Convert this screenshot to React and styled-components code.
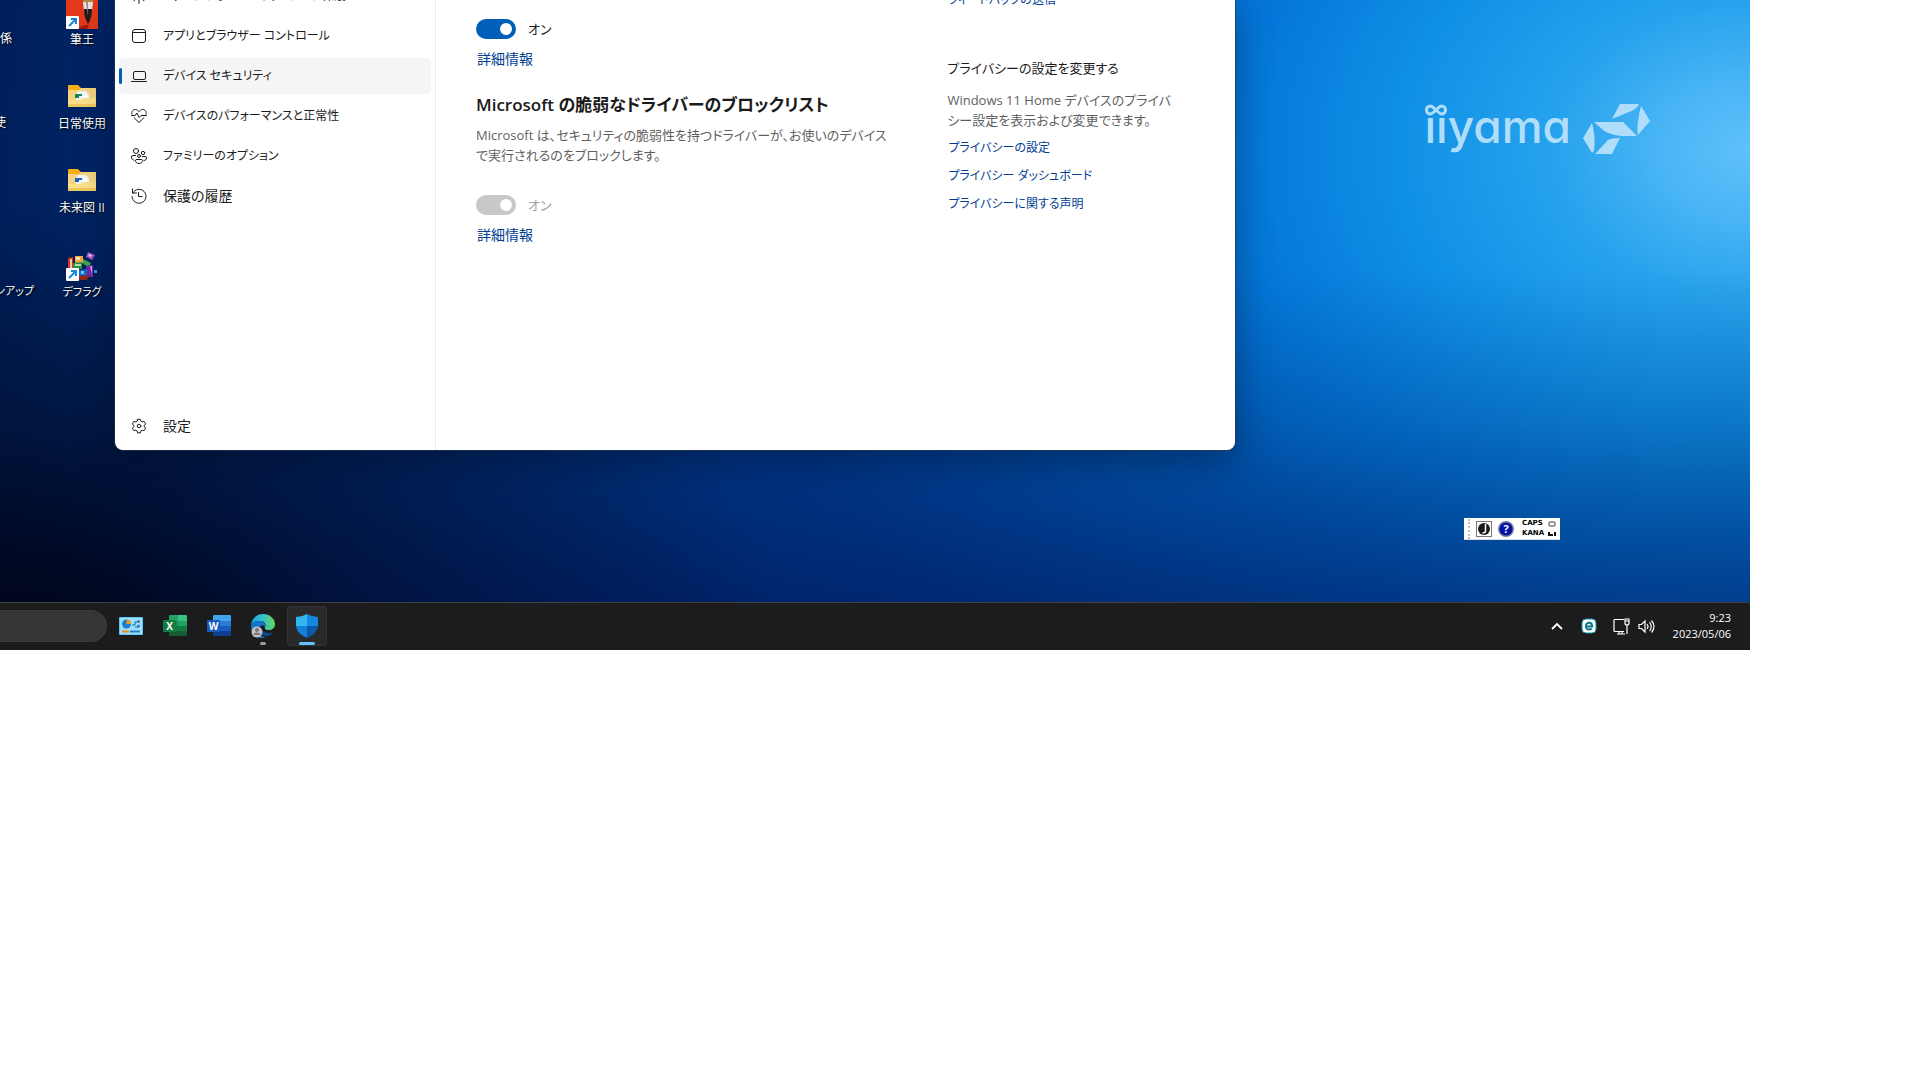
import styled, { createGlobalStyle, css } from "styled-components";

const GlobalStyle = createGlobalStyle`
  * {
    box-sizing: border-box;
  }

  body {
    margin: 0;
    background: #ffffff;
    font-family: "Open Sans", "Noto Sans CJK JP", sans-serif;
    font-feature-settings: "palt";
    font-size: 13px;
    line-height: 20px;
    color: #1b1b1b;
  }

  button {
    font: inherit;
    font-feature-settings: inherit;
    color: inherit;
    border: 0;
    padding: 0;
    background: none;
  }

  svg {
    display: block;
    flex: none;
  }
`;

const Screen = styled.div`
  margin-right: 170px;
  overflow: hidden;
`;

const Desktop = styled.main`
  display: grid;
  grid-template-columns: 115px minmax(0, 1fr) 515px;
  overflow: hidden;
  background:
    radial-gradient(ellipse 45% 75% at 0% 108%, rgba(0, 2, 14, 0.9), rgba(0, 2, 14, 0.35) 50%, transparent),
    linear-gradient(to bottom, transparent 45%, rgba(0, 30, 80, 0.2) 70%, rgba(0, 15, 75, 0.5) 100%),
    radial-gradient(
      ellipse 100% 220% at 100% 25%,
      #5fc1fb 0%,
      #4ab5f5 5%,
      #27a3ed 11%,
      #1090e6 20%,
      #0478da 29%,
      #0062c4 38%,
      #003f98 58%,
      #00276b 90%,
      #001c55 105%
    );
`;

/* 바탕화면 아이콘 */
const Shortcuts = styled.div`
  display: flex;
  gap: 16px;
  margin: -3px 0 0 -33px;
`;

const ShortcutColumn = styled.div`
  display: flex;
  flex-direction: column;
  gap: 32px;
  width: 66px;
  flex: none;
`;

const Shortcut = styled.button`
  display: flex;
  flex-direction: column;
  align-items: center;
  height: 52px;
  color: #ffffff;
  font-size: ${({ $small }) => ($small ? "11px" : "12px")};
  white-space: nowrap;
  text-shadow: 1px 1px 2px #000000;

  svg {
    margin-bottom: 1px;
  }
`;

const Blank = styled.span`
  height: 33px;
`;

/* Windows 보안 창 */
const Window = styled.section`
  display: grid;
  grid-template-columns: 321px minmax(0, 1fr);
  margin-bottom: 152px;
  background: #ffffff;
  border-radius: 0 0 8px 8px;
  box-shadow:
    0 0 0 1px rgba(40, 60, 80, 0.6),
    0 12px 36px rgba(0, 10, 30, 0.4);
  z-index: 1;
`;

const Nav = styled.nav`
  display: flex;
  flex-direction: column;
  gap: 4px;
  margin-top: -22px;
  padding: 0 4px 6px;
  border-right: 1px solid #ebebeb;
`;

const NavItem = styled.a`
  display: flex;
  align-items: center;
  gap: 16px;
  height: 36px;
  padding-left: 12px;
  border-radius: 5px;
  color: #1b1b1b;
  font-size: ${({ $large }) => ($large ? "14px" : "12px")};
  line-height: 22px;
  text-decoration: none;
  white-space: nowrap;

  ${({ $active }) =>
    $active &&
    css`
      padding-left: 0;
      gap: 0;
      background: #f5f5f5;

      &::before {
        content: "";
        width: 3px;
        height: 16px;
        margin-right: 9px;
        border-radius: 2px;
        background: #005fb8;
      }

      svg {
        margin-right: 16px;
      }
    `}

  &:last-child {
    margin-top: 190px;
  }
`;

const Content = styled.div`
  display: grid;
  grid-template-columns: minmax(0, 3fr) minmax(0, 2fr);
  gap: 40px;
  padding-left: 40px;
`;

const Article = styled.article`
  padding-top: 19px;
`;

const Aside = styled.aside`
  margin-top: -10px;
`;

const Title = styled.h2`
  margin: 22px 0 6px;
  font-size: 17px;
  font-weight: 600;
  line-height: 28px;
  white-space: nowrap;
`;

const SubTitle = styled.h3`
  margin: 48px 0 12px;
  font-size: 13px;
  font-weight: 400;
  line-height: 20px;
`;

const Text = styled.p`
  margin: 0;
  color: #5f5f5f;
  white-space: nowrap;
`;

const TextLink = styled.a`
  display: block;
  padding-left: 1px;
  color: #003e92;
  font-size: ${({ $large }) => ($large ? "14px" : "12px")};
  text-decoration: none;
`;

const LinkList = styled.div`
  display: flex;
  flex-direction: column;
  gap: 8px;
  margin-top: 8px;
`;

const SwitchLabel = styled.label`
  display: flex;
  align-items: center;
  gap: 12px;
  margin: ${({ $spaced }) => ($spaced ? "30px 0 10px" : "0 0 10px")};
  color: ${({ $disabled }) => ($disabled ? "#a0a0a0" : "#1b1b1b")};
`;

const Switch = styled.input`
  appearance: none;
  display: flex;
  align-items: center;
  justify-content: flex-end;
  width: 40px;
  height: 20px;
  margin: 0;
  padding: 4px;
  border-radius: 10px;
  background: #005fb8;

  &::before {
    content: "";
    width: 12px;
    height: 12px;
    border-radius: 50%;
    background: #ffffff;
  }

  &:disabled {
    background: #c8c8c8;
  }
`;

/* 배경 오른쪽 : 로고와 입력기 */
const Side = styled.div`
  display: flex;
  flex-direction: column;
  align-items: flex-end;
  justify-content: space-between;
  padding: 104px 100px 62px 0;
`;

const Logo = styled.div`
  display: flex;
  gap: 12px;
  color: #b0defa;
`;

const WordMark = styled.div`
  display: flex;
  flex-direction: column;
  font-family: Inter, sans-serif;
  font-feature-settings: "cv11";
  font-size: 46px;
  font-weight: 500;
  line-height: 20px;
`;

const ImeBar = styled.div`
  display: flex;
  align-items: center;
  gap: 6px;
  height: 22px;
  margin-right: 90px;
  padding: 0 2px 0 4px;
  background: #ffffff;
  border-bottom: 1px solid #dddddd;
`;

const Grip = styled.span`
  height: 20px;
  border-left: 2px dotted #c0c0c0;
`;

const LockKeys = styled.div`
  display: grid;
  grid-template-columns: 26px auto;
  align-items: center;
  row-gap: 1px;
  margin-left: 2px;
  font-family: "DejaVu Sans", sans-serif;
  font-size: 7px;
  font-weight: 700;
  line-height: 9px;
  color: #000000;
`;

/* 작업 표시줄 */
const Taskbar = styled.footer`
  display: flex;
  align-items: center;
  gap: 4px;
  height: 48px;
  background: #1c1c1c;
  box-shadow: inset 0 1px #404040;
  color: #ffffff;
`;

const Search = styled.input`
  width: 107px;
  height: 32px;
  border: 1px solid #3c3c3c;
  border-left: 0;
  border-radius: 0 16px 16px 0;
  background: #363636;
`;

const TaskButton = styled.button`
  display: grid;
  place-items: center;
  position: relative;
  width: 40px;
  height: 40px;
  border-radius: 4px;
  background: ${({ $active }) => ($active ? "#292929" : "transparent")};
  box-shadow: ${({ $active }) => ($active ? "inset 0 0 0 1px #333333" : "none")};

  &::after {
    content: "";
    display: ${({ $running, $active }) => ($running || $active ? "block" : "none")};
    position: absolute;
    bottom: 1px;
    left: ${({ $active }) => ($active ? "12px" : "17px")};
    right: ${({ $active }) => ($active ? "12px" : "17px")};
    height: 3px;
    border-radius: 2px;
    background: ${({ $active }) => ($active ? "#63c3fb" : "#9a9a9a")};
  }
`;

const Tray = styled.div`
  display: flex;
  align-items: center;
  margin-left: auto;
  padding-right: 19px;
`;

const TrayButton = styled.button`
  display: flex;
  gap: 8px;
  padding: 8px;
`;

const Clock = styled.time`
  margin-left: 10px;
  font-size: 11px;
  line-height: 16px;
  text-align: right;
`;

const NavIcon = ({ children }) => (
  <svg width="16" height="16" viewBox="0 0 16 16" fill="none" stroke="#1b1b1b" strokeLinecap="round" strokeLinejoin="round">
    {children}
  </svg>
);

const navItems = [
  {
    name: "ファイアウォールとネットワーク保護",
    icon: <path d="M8 8v7.5M5.5 11a3.5 3.5 0 1 1 5 0M3.5 13a6.5 6.5 0 1 1 9 0" />,
  },
  {
    name: "アプリとブラウザー コントロール",
    icon: (
      <>
        <rect x="1.5" y="1.5" width="13" height="13" rx="2.5" />
        <path d="M1.5 4.5h13" />
      </>
    ),
  },
  {
    name: "デバイス セキュリティ",
    active: true,
    icon: (
      <>
        <rect x="2.5" y="3.5" width="12" height="8" rx="1.5" />
        <path d="M.5 13.5h15" />
      </>
    ),
  },
  {
    name: "デバイスのパフォーマンスと正常性",
    icon: (
      <path d="M1 6.2C.1 3.3 2 1.500 4.300 1.500c1.700 0 2.700.9 3.700 2.200 1-1.300 2-2.200 3.700-2.200C14 1.500 15.900 3.300 15 6.200M.5 7.500h3.700l1.600-2.500 2.400 4.500L10 7.500h5.500M3 9.700l5 4.800 5-4.800" />
    ),
  },
  {
    name: "ファミリーのオプション",
    icon: (
      <>
        <circle cx="5" cy="3" r="2.500" />
        <circle cx="12" cy="5" r="1.700" />
        <circle cx="8" cy="8" r="1.500" />
        <path d="M4.500 7.500H2A1.500 1.500 0 0 0 .5 9c0 1.800 1 3 2.500 3.300M11.500 8.500H14A1.500 1.500 0 0 1 15.500 10c0 1.500-.9 2.400-2.500 2.500M5.500 11.500h5a1 1 0 0 1 1 1c0 1.800-1.400 3-3.500 3s-3.500-1.200-3.500-3a1 1 0 0 1 1-1z" />
      </>
    ),
  },
  {
    name: "保護の履歴",
    large: true,
    icon: <path d="M1.500 1v4h4M1.800 5A7 7 0 1 1 1 8.500M7.500 4.500v4H11" />,
  },
  {
    name: "設定",
    large: true,
    icon: (
      <>
        <circle cx="8" cy="8" r="1.800" />
        <path d="M6.600 1.300h2.800l.5 1.900 1.300.7 1.900-.5 1.500 2.500-1.300 1.400v1.500l1.300 1.400-1.500 2.500-1.900-.5-1.300.7-.5 1.900H6.600l-.5-1.900-1.300-.7-1.900.5-1.500-2.500 1.300-1.400V7.300L1.400 5.900l1.500-2.500 1.900.5 1.300-.7z" />
      </>
    ),
  },
];

const ShortcutArrow = () => (
  <>
    <rect x="0" y="19" width="13" height="13" rx="1" fill="#ffffff" />
    <path d="M3 29l6.500-6.500M5 22h5v5" fill="none" stroke="#1886d9" strokeWidth="2" />
  </>
);

const FudeIcon = () => (
  <svg width="32" height="32" viewBox="0 0 32 32">
    <rect width="32" height="32" fill="#e2391b" />
    <path d="M11 32q8-5 12-4l-2 4z" fill="#9c1c0b" />
    <path d="M17 0h10v6H17z" fill="#b88745" />
    <path d="M17 5h10l-1 9H18z" fill="#e6e4e2" />
    <path d="M18 12h8q0 9-4 15-4-7-4-15z" fill="#211b1b" />
    <path d="M20 5h2v14z" fill="#8b8989" />
    <ShortcutArrow />
  </svg>
);

const FolderIcon = ({ color }) => (
  <svg width="32" height="32" viewBox="0 0 32 32">
    <path d="M2 5q0-1 1-1h9l3 3h14q1 0 1 1v8H2z" fill="#f5ae13" />
    <path d="M2 9h11l2-2h14q1 0 1 1v18H2z" fill="#f4d680" />
    <path d="M12 10h8l3 4v5H10v-5z" fill="#f2f7fc" />
    <path d="M9 13h7v2h-3v2H9z" fill={color} />
    <path d="M17 14h4v3h-4z" fill="#ffffff" />
    <path d="M2 19h12l4-2h12v8q0 1-1 1H3q-1 0-1-1z" fill="#fbe08c" />
    <path d="M2 23h28v2q0 1-1 1H3q-1 0-1-1z" fill="#efc85e" />
  </svg>
);

const DefragIcon = () => (
  <svg width="32" height="32" viewBox="0 0 32 32">
    <path d="M2 9l5-1v14H2z" fill="#d7331f" />
    <path d="M4 10h2v10H4z" fill="#f5c3b5" />
    <path d="M9 7h8v7H9z" fill="#f0a848" />
    <path d="M10 8h4v3h-4z" fill="#ffe2a0" />
    <path d="M7 14l9-1v7H7z" fill="#2d9346" />
    <path d="M9 15h6v2H9z" fill="#a9e3ac" />
    <path d="M17 10l8 4-2 4-6-3z" fill="#35a852" />
    <path d="M22 3l7 3-3 5-6-3z" fill="#a052c8" />
    <path d="M23 5l3 1-1 2-3-1z" fill="#ecc9f7" />
    <path d="M20 17l7-1v12h-6z" fill="#7229a8" />
    <path d="M24 17l2 0v9z" fill="#d9a0f0" />
    <path d="M13 21l8-1v7h-8z" fill="#1b66c9" />
    <path d="M15 22h3v3h-3z" fill="#67c9f2" />
    <path d="M12 27l11-1-2 5H12z" fill="#92261c" />
    <path d="M28 21h3v3h-3z" fill="#299be2" />
    <ShortcutArrow />
  </svg>
);

const shortcuts = [
  [{ name: "関係" }, { name: "使" }, { name: "", id: "empty" }, { name: "クリーンアップ", small: true }],
  [
    { name: "筆王", icon: <FudeIcon /> },
    { name: "日常使用", icon: <FolderIcon color="#178a50" /> },
    { name: "未来図 II", icon: <FolderIcon color="#2463bd" /> },
    { name: "デフラグ", icon: <DefragIcon />, small: true },
  ],
];

const OfficeIcon = ({ letter, colors }) => (
  <svg width="24" height="24" viewBox="0 0 24 24">
    <path d="M6 2q0-1 1-1h8v6H6z" fill={colors[0]} />
    <path d="M15 1h8q1 0 1 1v5h-9z" fill={colors[1]} />
    <path d="M6 7h9v5H6z" fill={colors[2]} />
    <path d="M15 7h9v5h-9z" fill={colors[3]} />
    <path d="M6 12h18v5H6z" fill={colors[4]} />
    <path d="M6 17h18v4q0 1-1 1H7q-1 0-1-1z" fill={colors[5]} />
    <rect x="0" y="6" width="13" height="12" rx="1" fill={colors[6]} />
    <text x="6.500" y="16" textAnchor="middle" fontFamily="Open Sans" fontSize="10" fontWeight="700" fill="#ffffff">
      {letter}
    </text>
  </svg>
);

const StatsIcon = () => (
  <svg width="24" height="24" viewBox="0 0 24 24">
    <rect x="0" y="3" width="24" height="18" rx="1" fill="#57c5f7" />
    <rect x="1" y="4" width="22" height="16" fill="#9fdffb" />
    <circle cx="7.500" cy="10" r="4.500" fill="#1a7fd0" />
    <path d="M7.500 10V5.500a4.500 4.500 0 0 1 4.500 4.500z" fill="#f39a1d" />
    <path d="M13 11h3V8h2M16 13h4" fill="none" stroke="#1668a8" />
    <circle cx="19.500" cy="7.500" r="1.500" fill="#2d7fc4" />
    <circle cx="19.500" cy="12" r="1.500" fill="#2d7fc4" />
    <path d="M3 17.500h7" stroke="#e58f1c" strokeWidth="2" />
    <path d="M11 17.500h10" stroke="#2180c8" strokeWidth="2" />
  </svg>
);

const EdgeIcon = () => (
  <svg width="24" height="24" viewBox="0 0 24 24">
    <defs>
      <linearGradient id="edgeTop" x1="0" x2="1">
        <stop offset="0" stopColor="#1ba3e2" />
        <stop offset="0.500" stopColor="#35c1ce" />
        <stop offset="1" stopColor="#65d94f" />
      </linearGradient>
    </defs>
    <path d="M0 11C1 4 6 0 12 0c7 0 12 5 12 10 0 4-3 6-6 6-3 0-5-1-4-3 2-4-2-6-5-6-4 0-7 1-9 4z" fill="url(#edgeTop)" />
    <path d="M0 12c1-4 5-6 9-5 4 .5 6 3 5 6-2-3-6-1-6 3 0 4 3 7 7 7.500C6 26 0 20 0 12z" fill="#1375ca" />
    <path d="M9 13c-2 6 4 11 10 8l3-3c-4 2-11 1-13-5z" fill="#0c4b8f" />
    <circle cx="6" cy="18" r="5.500" fill="#c4c2c0" />
    <circle cx="6" cy="16" r="2" fill="#777777" />
    <path d="M2.500 21q0-2.500 3.500-2.500t3.500 2.500z" fill="#777777" />
  </svg>
);

const ShieldIcon = () => (
  <svg width="24" height="24" viewBox="0 0 24 24">
    <path d="M12 0Q7 3 1 3v9h11z" fill="#32b6f0" />
    <path d="M12 0q5 3 11 3v9H12z" fill="#1587dc" />
    <path d="M1 12h11v12Q2 20 1 12z" fill="#1081d6" />
    <path d="M23 12H12v12q10-4 11-12z" fill="#0c59a8" />
  </svg>
);

const tasks = [
  { name: "統計", icon: <StatsIcon /> },
  {
    name: "Excel",
    icon: <OfficeIcon letter="X" colors={["#21a366", "#33c481", "#1b8a53", "#21a366", "#107c41", "#185c37", "#107c41"]} />,
  },
  {
    name: "Word",
    icon: <OfficeIcon letter="W" colors={["#41a5ee", "#41a5ee", "#2b7cd3", "#2b7cd3", "#185abd", "#103f91", "#185abd"]} />,
  },
  { name: "Edge", icon: <EdgeIcon />, running: true },
  { name: "Windows セキュリティ", icon: <ShieldIcon />, active: true },
];

const App = () => {
  return (
    <>
      <GlobalStyle />
      <Screen>
        <Desktop>
          <Shortcuts>
            {shortcuts.map((column, index) => (
              <ShortcutColumn key={index}>
                {column.map((item) => (
                  <Shortcut key={item.id || item.name} aria-label={item.name} $small={item.small}>
                    {item.icon || <Blank />}
                    {item.name}
                  </Shortcut>
                ))}
              </ShortcutColumn>
            ))}
          </Shortcuts>

          <Window>
            <Nav>
              {navItems.map((item) => (
                <NavItem key={item.name} href="#" $active={item.active} $large={item.large}>
                  <NavIcon>{item.icon}</NavIcon>
                  {item.name}
                </NavItem>
              ))}
            </Nav>
            <Content>
              <Article>
                <SwitchLabel>
                  <Switch type="checkbox" role="switch" defaultChecked />
                  オン
                </SwitchLabel>
                <TextLink href="#" $large>
                  詳細情報
                </TextLink>
                <Title>Microsoft の脆弱なドライバーのブロックリスト</Title>
                <Text>
                  Microsoft は、セキュリティの脆弱性を持つドライバーが、お使いのデバイス
                  <br />
                  で実行されるのをブロックします。
                </Text>
                <SwitchLabel $spaced $disabled>
                  <Switch type="checkbox" role="switch" defaultChecked disabled />
                  オン
                </SwitchLabel>
                <TextLink href="#" $large>
                  詳細情報
                </TextLink>
              </Article>
              <Aside>
                <TextLink href="#">フィードバックの送信</TextLink>
                <SubTitle>プライバシーの設定を変更する</SubTitle>
                <Text>
                  Windows 11 Home デバイスのプライバ
                  <br />
                  シー設定を表示および変更できます。
                </Text>
                <LinkList>
                  <TextLink href="#">プライバシーの設定</TextLink>
                  <TextLink href="#">プライバシー ダッシュボード</TextLink>
                  <TextLink href="#">プライバシーに関する声明</TextLink>
                </LinkList>
              </Aside>
            </Content>
          </Window>

          <Side>
            <Logo>
              <WordMark aria-label="iiyama">
                <svg width="22" height="12" viewBox="0 0 22 12" fill="none" stroke="#b0defa" strokeWidth="3">
                  <path d="M11 6C8 9 7 10 5.500 10a4 4 0 0 1 0-8C8 2 14 10 16.500 10a4 4 0 0 0 0-8C15 2 14 3 11 6z" />
                </svg>
                ııyama
              </WordMark>
              <svg width="67" height="50" viewBox="0 0 67 50" fill="#b0defa">
                <path d="M37 0h19q-3 6-10 8L29 15z" />
                <path d="M58 2l9 15-12 14q-2-9 3-29z" />
                <path d="M11 18h29l14 14H38Q25 30 20 26z" />
                <path d="M9 19q4 15 2 28l-2 2L0 34z" />
                <path d="M37 34L29 50H12l13-14q3-2 12-2z" />
              </svg>
            </Logo>
            <ImeBar>
              <Grip />
              <svg width="16" height="16" viewBox="0 0 16 16">
                <rect x="0.500" y="0.500" width="15" height="15" fill="#ffffff" stroke="#777777" />
                <circle cx="8" cy="8" r="6" fill="#1a1a1a" />
                <path d="M9.500 3v7q0 2-3 2" fill="none" stroke="#ffffff" strokeWidth="1.500" />
              </svg>
              <svg width="16" height="16" viewBox="0 0 16 16">
                <circle cx="8" cy="8" r="7.300" fill="#0713a8" stroke="#7d8496" strokeWidth="1.400" />
                <text x="8" y="12" textAnchor="middle" fontFamily="Open Sans" fontSize="11" fontWeight="700" fill="#ffffff">
                  ?
                </text>
              </svg>
              <LockKeys>
                <span>CAPS</span>
                <svg width="10" height="6" viewBox="0 0 10 6">
                  <rect x="1" y="1" width="6" height="4" rx="1.500" fill="none" stroke="#777777" strokeWidth="1.500" />
                </svg>
                <span>KANA</span>
                <svg width="10" height="6" viewBox="0 0 10 6">
                  <path d="M1 1v3h4M7 1v4" fill="none" stroke="#111111" strokeWidth="2" />
                </svg>
              </LockKeys>
            </ImeBar>
          </Side>
        </Desktop>

        <Taskbar>
          <Search type="search" aria-label="検索" />
          {tasks.map((task) => (
            <TaskButton key={task.name} aria-label={task.name} $running={task.running} $active={task.active}>
              {task.icon}
            </TaskButton>
          ))}
          <Tray>
            <TrayButton aria-label="隠れているインジケーター">
              <svg width="16" height="16" viewBox="0 0 16 16" fill="none" stroke="#ffffff" strokeWidth="1.800">
                <path d="M3 11l5-5 5 5" />
              </svg>
            </TrayButton>
            <TrayButton aria-label="セキュリティ">
              <svg width="16" height="16" viewBox="0 0 16 16">
                <rect x="1" y="1" width="14" height="14" rx="4" fill="#ffffff" stroke="#1295a5" />
                <path d="M5 8.500h6.200C11.200 3.500 5 3.500 4.900 8c0 4 4 4.300 5.800 2.500" fill="none" stroke="#08798a" strokeWidth="2" />
              </svg>
            </TrayButton>
            <TrayButton aria-label="ネットワークと音量">
              <svg width="17" height="17" viewBox="0 0 17 17" fill="none" stroke="#ffffff" strokeWidth="1.200">
                <path d="M11 1.500H2A1 1 0 0 0 1 2.500v10q0 1 1 1h9M4 16h8M6 13.500V16M9 13.500V16M14 7v9M12 1h4v4q0 2-2 2t-2-2zM12 3h4" />
              </svg>
              <svg width="17" height="17" viewBox="0 0 17 17" fill="none" stroke="#ffffff" strokeWidth="1.200">
                <path d="M1 6.500h2.500L7 3v11l-3.500-3.500H1zM9 6q2 2.500 0 5M11.500 4q3.500 4.500 0 9M13.500 2.500q5 6 0 12" />
              </svg>
            </TrayButton>
            <Clock dateTime="2023-05-06T09:23">
              9:23
              <br />
              2023/05/06
            </Clock>
          </Tray>
        </Taskbar>
      </Screen>
    </>
  );
};

export default App;
